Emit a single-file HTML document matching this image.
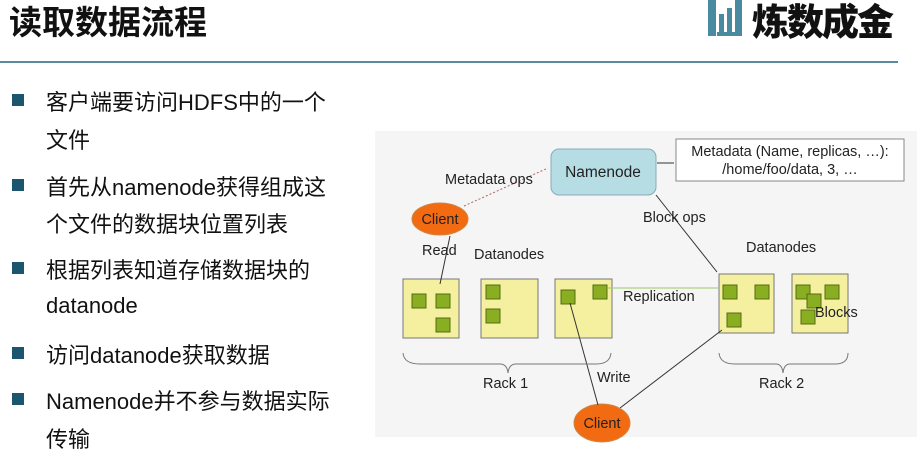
<!DOCTYPE html>
<html><head><meta charset="utf-8"><style>
body{margin:0;width:917px;height:457px;background:#fff;position:relative;overflow:hidden;font-family:"Liberation Sans","Noto Sans CJK SC",sans-serif}
.t{position:absolute;left:9px;top:-4px;font-size:33px;font-weight:bold;color:#111;letter-spacing:0px}
.hr{position:absolute;left:0;top:61px;width:898px;height:2px;background:#5a8aa0}
.logo{position:absolute;left:752px;top:3px;font-size:37px;font-weight:900;color:#111;line-height:40px;letter-spacing:-2px}
.lb{position:absolute;left:706px;top:0;width:44px;height:36px}
.b{position:absolute;left:12px;width:12px;height:12px;background:#1c566e}
.l{position:absolute;left:46px;font-size:22px;color:#111;white-space:nowrap}
</style></head><body>
<div class="t">读取数据流程</div>
<svg class="lb" viewBox="0 0 44 36"><rect x="2" y="0" width="8" height="36" fill="#4a8aa0"/><rect x="13" y="14" width="5" height="22" fill="#4a8aa0"/><rect x="21" y="8" width="5" height="28" fill="#4a8aa0"/><rect x="29" y="0" width="7" height="36" fill="#4a8aa0"/><rect x="11" y="32" width="25" height="4" fill="#4a8aa0"/></svg>
<div class="logo">炼数成金</div>
<div class="hr"></div>

<div class="b" style="top:94px"></div><div class="l" style="top:85px">客户端要访问HDFS中的一个</div>
<div class="l" style="top:123px">文件</div>
<div class="b" style="top:179px"></div><div class="l" style="top:170px">首先从namenode获得组成这</div>
<div class="l" style="top:207px">个文件的数据块位置列表</div>
<div class="b" style="top:262px"></div><div class="l" style="top:253px">根据列表知道存储数据块的</div>
<div class="l" style="top:293px">datanode</div>
<div class="b" style="top:347px"></div><div class="l" style="top:338px">访问datanode获取数据</div>
<div class="b" style="top:393px"></div><div class="l" style="top:384px">Namenode并不参与数据实际</div>
<div class="l" style="top:422px">传输</div>

<svg style="position:absolute;left:0;top:0" width="917" height="457" font-family="Liberation Sans, sans-serif" font-size="14.5" fill="#222">
<rect x="375" y="131" width="542" height="306" fill="#f5f5f5"/>
<rect x="551" y="149" width="105" height="46" rx="8" fill="#b6dde3" stroke="#8ab" />
<text x="603" y="177" text-anchor="middle" font-size="15.5">Namenode</text>
<rect x="676" y="139" width="228" height="42" fill="#fff" stroke="#888"/>
<text x="790" y="156" text-anchor="middle">Metadata (Name, replicas, …):</text>
<text x="790" y="174" text-anchor="middle">/home/foo/data, 3, …</text>
<line x1="657" y1="163" x2="674" y2="163" stroke="#333"/>
<line x1="464" y1="206" x2="548" y2="168" stroke="#a66" stroke-dasharray="2,2"/>
<text x="445" y="184">Metadata ops</text>
<ellipse cx="440" cy="219" rx="28" ry="16" fill="#f26a12" stroke="#c84"/>
<text x="440" y="224" text-anchor="middle" fill="#222">Client</text>
<ellipse cx="602" cy="423" rx="28" ry="19" fill="#f26a12" stroke="#c84"/>
<text x="602" y="428" text-anchor="middle">Client</text>
<g fill="#f5f0a0" stroke="#777">
<rect x="403" y="279" width="56" height="59"/><rect x="481" y="279" width="57" height="59"/><rect x="555" y="279" width="57" height="59"/>
<rect x="719" y="274" width="55" height="59"/><rect x="792" y="274" width="56" height="59"/>
</g>
<g fill="#8aae22" stroke="#556b10">
<rect x="412" y="294" width="14" height="14"/><rect x="436" y="294" width="14" height="14"/><rect x="436" y="318" width="14" height="14"/>
<rect x="486" y="285" width="14" height="14"/><rect x="486" y="309" width="14" height="14"/>
<rect x="561" y="290" width="14" height="14"/><rect x="593" y="285" width="14" height="14"/>
<rect x="723" y="285" width="14" height="14"/><rect x="755" y="285" width="14" height="14"/><rect x="727" y="313" width="14" height="14"/>
<rect x="796" y="285" width="14" height="14"/><rect x="825" y="285" width="14" height="14"/><rect x="807" y="294" width="14" height="14"/><rect x="801" y="310" width="14" height="14"/>
</g>
<line x1="440" y1="284" x2="450" y2="236" stroke="#333"/>
<line x1="608" y1="288" x2="718" y2="288" stroke="#9c6"/>
<line x1="656" y1="195" x2="717" y2="272" stroke="#333"/>
<line x1="598" y1="405" x2="570" y2="303" stroke="#333"/>
<line x1="620" y1="408" x2="722" y2="330" stroke="#333"/>
<text x="422" y="255">Read</text>
<text x="474" y="259">Datanodes</text>
<text x="746" y="252">Datanodes</text>
<text x="643" y="222">Block ops</text>
<text x="623" y="301">Replication</text>
<text x="815" y="317">Blocks</text>
<text x="483" y="388">Rack 1</text>
<text x="759" y="388">Rack 2</text>
<text x="597" y="382">Write</text>
<g fill="none" stroke="#777">
<path d="M403 353 Q404 364 420 364 L500 364 Q507 364 508 373 Q509 364 516 364 L596 364 Q610 364 611 353"/>
<path d="M719 353 Q720 364 735 364 L776 364 Q782 364 783 373 Q784 364 790 364 L835 364 Q848 364 848 353"/>
</g>
</svg>
</body></html>
